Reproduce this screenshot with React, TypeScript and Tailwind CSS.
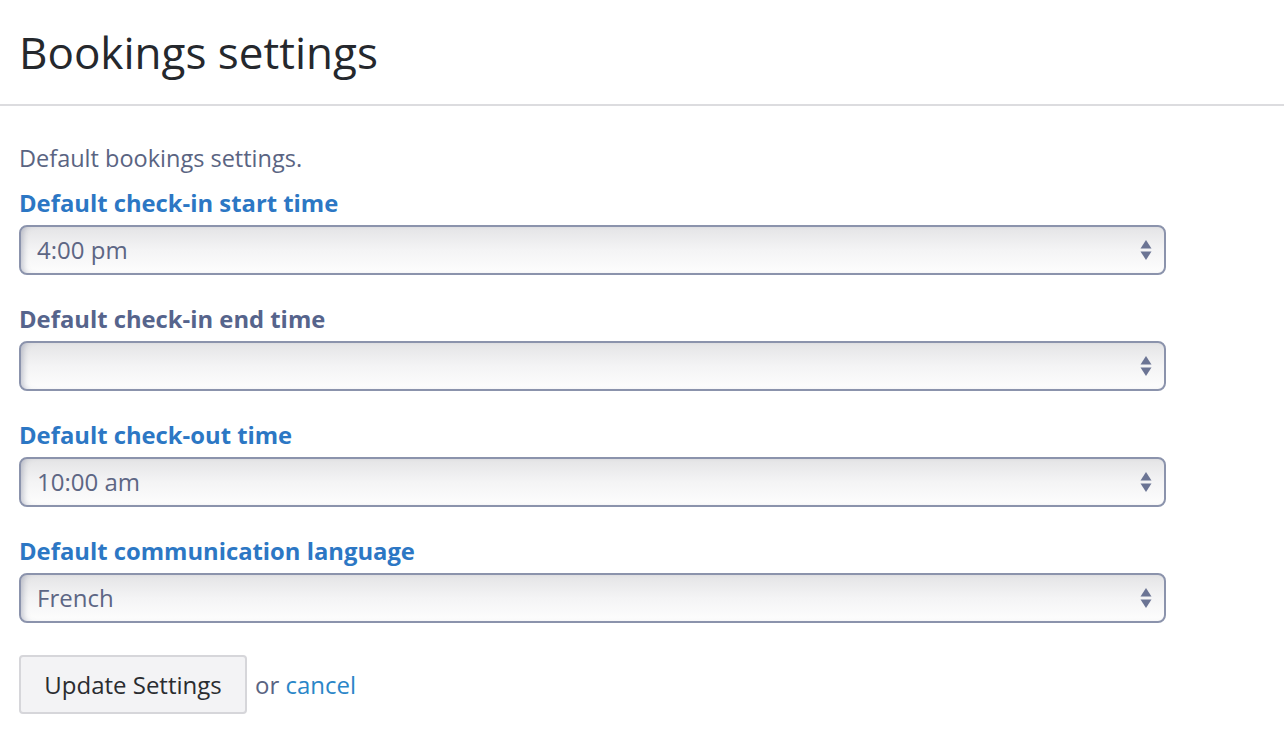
const fields = [
  { label: "Default check-in start time", value: "4:00 pm", muted: false },
  { label: "Default check-in end time", value: "", muted: true },
  { label: "Default check-out time", value: "10:00 am", muted: false },
  { label: "Default communication language", value: "French", muted: false },
];

function Arrows() {
  return (
    <svg width="12" height="22" viewBox="0 0 12 22" className="shrink-0">
      <path d="M6 1 L11.5 9.5 L0.5 9.5 Z" fill="#6b7494" />
      <path d="M6 21 L11.5 12.5 L0.5 12.5 Z" fill="#6b7494" />
    </svg>
  );
}

function FakeSelect({ value }: { value: string }) {
  return (
    <div className="flex h-[50px] w-[1147px] items-center justify-between rounded-[8px] border-2 border-[#8b93ac] bg-gradient-to-b from-[#e4e4e6] via-[#f4f4f5] to-[#fdfdfd] pl-[16px] pr-[12px] shadow-[inset_6px_0_6px_-4px_rgba(80,90,120,0.35)]">
      <span className="text-[24px] text-[#5d6684]">{value}</span>
      <Arrows />
    </div>
  );
}

export default function App() {
  return (
    <div className="min-h-screen bg-white font-['Open_Sans',sans-serif]">
      <div className="border-b-2 border-[#dcdcdf] px-[19px] pb-[23px] pt-[23px]">
        <h1 className="text-[44px] leading-[58px] text-[#25282d]">Bookings settings</h1>
      </div>
      <div className="px-[19px] pt-[37px]">
        <p className="text-[23.5px] leading-[30px] text-[#5a6482]">Default bookings settings.</p>
        <div className="mt-[14px] flex flex-col gap-[28px]">
          {fields.map((f) => (
            <div key={f.label} className="flex flex-col gap-[6px]">
              <label
                className={
                  f.muted
                    ? "text-[23.8px] font-bold leading-[32px] text-[#56648c]"
                    : "text-[23.8px] font-bold leading-[32px] text-[#2c77c4]"
                }
              >
                {f.label}
              </label>
              <FakeSelect value={f.value} />
            </div>
          ))}
        </div>
        <div className="mt-[32px] flex items-center gap-[8px]">
          <button className="h-[59px] w-[228px] rounded-[4px] border-2 border-[#d6d6da] bg-[#f3f3f5] text-[24px] text-[#2a2c30]">
            Update Settings
          </button>
          <span className="text-[24px] text-[#5a6482]">
            or <a className="text-[#2a86c8]" href="#">cancel</a>
          </span>
        </div>
      </div>
    </div>
  );
}
